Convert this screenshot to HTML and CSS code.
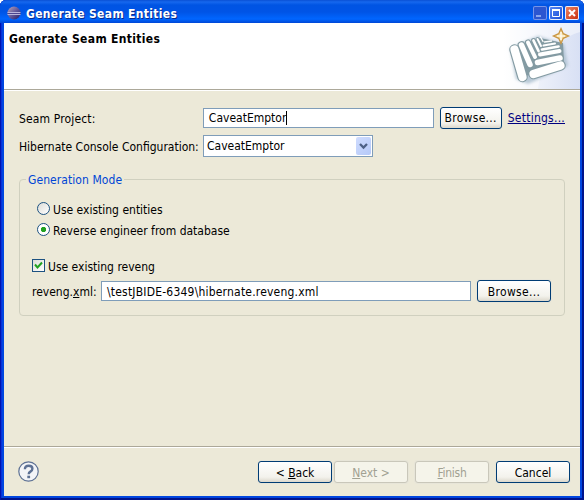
FILE: index.html
```
<!DOCTYPE html>
<html lang="en">
<head>
<meta charset="utf-8">
<title>Generate Seam Entities</title>
<link rel="stylesheet" href="styles.css">
</head>
<body>
<div class="window">
  <div class="titlebar">
    <svg class="logo" width="16" height="16" viewBox="0 0 16 16">
      <defs><linearGradient id="orb" x1="0" y1="0" x2="1" y2="1"><stop offset="0" stop-color="#b9a5b8"/><stop offset=".5" stop-color="#63599c"/><stop offset="1" stop-color="#241b63"/></linearGradient></defs>
      <circle cx="8" cy="9" r="6.500" fill="url(#orb)"/>
      <path d="M1.500 8.500h13M1.500 10.500h13" stroke="#b9b4dc" stroke-width="1"/><path d="M1.500 9.500h13" stroke="#4d4590" stroke-width="1"/>
    </svg>
    <span class="caption">Generate Seam Entities</span>
    <div class="controls">
      <span class="ctl min"><svg width="14" height="14"><path d="M3 10h5" stroke="#8ba6ee" stroke-width="2"/></svg></span>
      <span class="ctl"><svg width="14" height="14"><path d="M3.500 3.500h7v7h-7z" fill="none" stroke="#fff" stroke-width="1"/><path d="M3 4h8" stroke="#fff" stroke-width="2"/></svg></span>
      <span class="ctl close"><svg width="14" height="14"><path d="M4 4l6 6M10 4l-6 6" stroke="#fff" stroke-width="2"/></svg></span>
    </div>
  </div>
  <div class="client">
    <header class="banner">
      <h1>Generate Seam Entities</h1>
      <svg class="art" width="76" height="66" viewBox="504 23 76 66">
        <defs>
          <linearGradient id="sky" x1="0" y1="0" x2="1" y2="0"><stop offset="0" stop-color="#fff"/><stop offset="1" stop-color="#d8e0f4"/></linearGradient>
          <filter id="soft" x="-20%" y="-20%" width="140%" height="140%"><feGaussianBlur stdDeviation="1.600"/></filter>
        </defs>
        <rect x="504" y="23" width="76" height="66" fill="url(#sky)"/>
        <path d="M504 23h76v9q-22 6-34 30-7 16-8 27h-34z" fill="#fff" opacity=".45"/>
        <path d="M510 48l28-12 26 8 4 22-40 18-12-5z" fill="#a9bdcd" opacity=".8" filter="url(#soft)"/>
        <path d="M514 47l26-9 23 5 1 20-34 12-10 2z" fill="#849ba3"/>
        <g stroke-linecap="round" fill="none">
          <g stroke="#849ba3">
            <path d="M514.500 49.500l8 27.500M533.500 74l27-8.500" stroke-width="10.500"/>
            <path d="M521.500 45l8.500 19.500M537.500 62.500l22.500-4.500" stroke-width="7.800"/>
            <path d="M528 42.500l7 14.500M540 54.500l19.500-3.500" stroke-width="6.300"/>
            <path d="M533.500 40.500l5 10.500M542 49.500l16.500-3" stroke-width="4.800"/>
            <path d="M537.500 39l3.500 7M543.500 45.500l11.500-2" stroke-width="3.800"/>
          </g>
          <g stroke="#fff">
            <path d="M514.500 49.500l8 27.500M533.500 74l27-8.500" stroke-width="8.200"/>
            <path d="M521.500 45l8.500 19.500M537.500 62.500l22.500-4.500" stroke-width="5.500"/>
            <path d="M528 42.500l7 14.500M540 54.500l19.500-3.500" stroke-width="4"/>
            <path d="M533.500 40.500l5 10.500M542 49.500l16.500-3" stroke-width="2.700"/>
            <path d="M537.500 39l3.500 7M543.500 45.500l11.500-2" stroke-width="2"/>
            <path d="M540.500 37l2.500 4.500M544.500 42l7-1" stroke-width="1.300"/>
          </g>
        </g>
        <path d="M561 28.500l2.300 5.200 5.200 2.300-5.200 2.300-2.300 5.200-2.300-5.200-5.200-2.300 5.200-2.300z" fill="#f5dc9c" stroke="#c99645" stroke-width="1.300"/>
        <path d="M561 32v8M557 36h8" stroke="#fff" stroke-width="1.200"/>
      </svg>
    </header>
    <main class="page">
      <div class="row project">
        <span class="name"><span class="w-project">Seam Project:</span></span>
        <div class="field"><span>CaveatEmptor</span><i class="caret"></i></div>
        <div class="button browse"><span class="w-browse">Browse...</span></div>
        <a class="link"><span class="w-settings">Settings...</span></a>
      </div>
      <div class="row config">
        <span class="name"><span>Hibernate Console Configuration:</span></span>
        <div class="combo"><span>CaveatEmptor</span>
          <span class="arrow"><svg width="15" height="18"><path d="M4 7l3.500 3.500L11 7" fill="none" stroke="#4d6185" stroke-width="2.300"/></svg></span>
        </div>
      </div>
      <fieldset class="group">
        <legend>Generation Mode</legend>
        <div class="option"><span class="radio"></span><span class="text">Use existing entities</span></div>
        <div class="option"><span class="radio on"></span><span class="text">Reverse engineer from database</span></div>
        <div class="option check"><span class="checkbox"><svg width="11" height="11"><path d="M2 4.500l2.500 3L9 2.500" fill="none" stroke="#21a121" stroke-width="2"/></svg></span><span class="text">Use existing reveng</span></div>
        <div class="row file">
          <span class="filename text">reveng.<u>x</u>ml:</span>
          <div class="field"><span class="w-path text">\testJBIDE-6349\hibernate.reveng.xml</span></div>
          <div class="button"><span class="w-browse text">Browse...</span></div>
        </div>
      </fieldset>
    </main>
    <footer class="actions">
      <svg class="help" width="22" height="22" viewBox="0 0 22 22"><circle cx="10.500" cy="10.500" r="9.700" fill="#f3f4f7" stroke="#5d7194" stroke-width="1.200"/><path d="M6.900 8.200q0-3.500 3.800-3.500 3.700 0 3.700 3 0 1.700-2 2.900-1.700 1-1.700 2.700" fill="none" stroke="#5d7194" stroke-width="2.400"/><path d="M9.300 14.700h2.800v2.500H9.300z" fill="#5d7194"/></svg>
      <div class="button back"><span class="text">&lt; <u>B</u>ack</span></div>
      <div class="button disabled"><span class="text"><u>N</u>ext &gt;</span></div>
      <div class="button disabled finish"><span class="w-finish text"><u>F</u>inish</span></div>
      <div class="button cancel"><span class="text">Cancel</span></div>
    </footer>
  </div>
</div>
</body>
</html>
```
FILE: styles.css
```
* { box-sizing: border-box; }
body { margin: 0; width: 584px; height: 500px; overflow: hidden; background: #fff; color: #000; font: 12px/16px "DejaVu Sans Condensed", "DejaVu Sans", sans-serif; font-stretch: condensed; white-space: nowrap; }
svg { display: block; flex: none; }
.window { width: 584px; height: 500px; padding: 0 4px 4px; display: flex; flex-direction: column; border-radius: 6px 6px 0 0; background: #0046e0; box-shadow: inset 1px 0 #0014b0, inset -2px -2px #00138c, inset 2px 0 #0831d9; }
.titlebar { height: 23px; margin: 0 -4px; padding: 4px 5px 0 6px; display: flex; border-radius: 6px 6px 0 0; background: linear-gradient(#0a50d4 0, #1668ee 2px, #0054e3 5px, #0054e6 12px, #0066ff 19px, #0047d6 23px); }
.caption { margin-left: 4px; margin-top: 2px; color: #fff; font-weight: bold; letter-spacing: .33px; text-shadow: 1px 1px #0a2a8a; }
.controls { margin-left: auto; display: flex; gap: 2px; padding-top: 2px; }
.ctl { width: 14px; height: 14px; border-radius: 2px; box-shadow: inset 0 0 0 1px #e6edff; background: linear-gradient(135deg, #5d8cf5, #1648d5); }
.ctl.min { box-shadow: inset 0 0 0 1px #7794e8; background: #2c56d0; }
.ctl.close { background: linear-gradient(135deg, #f08a68, #c52a0a); }
.client { flex: 1; display: flex; flex-direction: column; background: #ece9d8; }
.banner { height: 68px; display: flex; justify-content: space-between; background: #fff; border-bottom: 1px solid #fff; box-shadow: inset 0 -1px #aca899; }
h1 { margin: 8px 0 0 5px; font-size: 12px; line-height: 16px; font-weight: bold; letter-spacing: .33px; }
.page { flex: 1; padding: 16px 15px 0; }
.row { display: flex; align-items: center; }
.name { width: 184px; padding-top: 1px; }
.project { height: 22px; }
.config { height: 22px; margin-top: 6px; }
.field { width: 231px; height: 20px; padding: 0 5px; display: flex; align-items: center; background: #fff; border: 1px solid #7f9db9; }
.caret { width: 1px; height: 14px; background: #000; }
.button { width: 74px; height: 22px; display: flex; justify-content: center; align-items: center; flex: none; border: 1px solid #003c74; border-radius: 3px; background: linear-gradient(#fff, #f3f2ec 75%, #dcd8cc); box-shadow: 0 0 0 1px #e7e5d8; }
.browse { width: 62px; margin-left: 6px; }
.link { margin-left: 6px; color: #000080; text-decoration: underline; }
.combo { width: 170px; height: 22px; padding: 0 1px 0 3px; display: flex; align-items: center; justify-content: space-between; background: #fff; border: 1px solid #7f9db9; }
.arrow { width: 15px; height: 18px; border-radius: 2px; background: linear-gradient(135deg, #cfdcfe, #b5c9f8); }
.text { padding-top: 2px; }
.group { width: 546px; height: 145px; margin: 14px 0 0; padding: 11px 13px 0 12px; border: 1px solid #d0d0bf; border-radius: 4px; min-width: 0; }
legend { height: 16px; margin-left: -6px; padding: 1px 2px 0; color: #0046d5; letter-spacing: .07px; }
.option { height: 21px; padding-left: 5px; display: flex; align-items: center; gap: 3px; }
.radio { width: 13px; height: 13px; border: 1px solid #1d5281; border-radius: 50%; background: linear-gradient(135deg, #dcdcd7, #fff); }
.radio.on { background: radial-gradient(circle, #21a121 0 2.3px, #fff 3px); }
.option.check { margin-top: 15px; padding-left: 0; }
.checkbox { width: 13px; height: 13px; border: 1px solid #1d5281; background: linear-gradient(135deg, #dcdcd7, #fff); }
.file { height: 22px; margin-top: 4px; }
.filename { width: 69px; }
.file .field { width: 370px; }
.file .button { margin-left: 6px; }
.w-project { letter-spacing: .15px; }
.w-browse { letter-spacing: .3px; }
.w-settings { letter-spacing: .25px; }
.w-path { letter-spacing: .2px; }
.w-finish { letter-spacing: -.3px; }
.actions { height: 50px; padding: 14px 10px 0 14px; display: flex; border-top: 1px solid #aca899; box-shadow: inset 0 1px #fff; }
.back { margin-left: auto; }
.disabled { margin-left: 2px; color: #a1a192; border-color: #c9c7ba; background: #f5f4ea; }
.finish, .cancel { margin-left: 7px; }
```
